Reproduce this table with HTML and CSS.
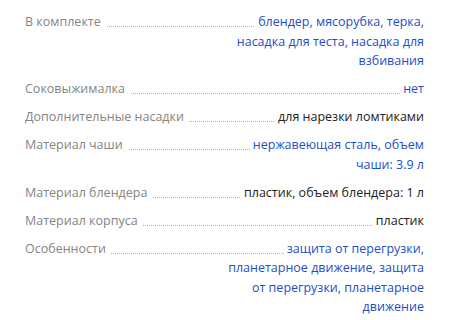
FILE: index.html
```html
<!DOCTYPE html>
<html lang="ru">
<head>
<meta charset="utf-8">
<link rel="stylesheet" href="styles.css">
</head>
<body>
<dl class="specs">
  <div class="row">
    <dt class="label"><span>В комплекте</span></dt>
    <dd class="value link"><span>блендер, мясорубка, терка, насадка для теста, насадка для взбивания</span></dd>
  </div>
  <div class="row">
    <dt class="label"><span>Соковыжималка</span></dt>
    <dd class="value link"><span>нет</span></dd>
  </div>
  <div class="row">
    <dt class="label"><span>Дополнительные насадки</span></dt>
    <dd class="value"><span>для нарезки ломтиками</span></dd>
  </div>
  <div class="row">
    <dt class="label"><span>Материал чаши</span></dt>
    <dd class="value link"><span>нержавеющая сталь, объем чаши: 3.9 л</span></dd>
  </div>
  <div class="row">
    <dt class="label"><span>Материал блендера</span></dt>
    <dd class="value"><span>пластик, объем блендера: 1 л</span></dd>
  </div>
  <div class="row">
    <dt class="label"><span>Материал корпуса</span></dt>
    <dd class="value"><span>пластик</span></dd>
  </div>
  <div class="row">
    <dt class="label"><span>Особенности</span></dt>
    <dd class="value link"><span>защита от перегрузки, планетарное движение, защита от перегрузки, планетарное движение</span></dd>
  </div>
</dl>
</body>
</html>
```

FILE: styles.css
```css
html, body {
  margin: 0;
  padding: 0;
  background: #fff;
}
body {
  font-family: "Open Sans", "Noto Sans", sans-serif;
  font-size: 12.5px;
  line-height: 19.5px;
  color: #222;
}
.specs {
  margin: 0;
  padding: 12px 31px 0 25px;
  display: flex;
  flex-direction: column;
  gap: 8.5px;
}
.row {
  display: flex;
  justify-content: space-between;
  align-items: flex-start;
  background-image: linear-gradient(to right, #b3b3b3 50%, transparent 50%);
  background-size: 2px 1px;
  background-repeat: repeat-x;
  background-position: 0 14px;
}
.label {
  margin: 0;
  color: #858585;
  flex: none;
}
.label span {
  background: #fff;
  padding-right: 5px;
}
.value {
  margin: 0;
  max-width: 196px;
  text-align: right;
}
.value span {
  background: #fff;
  padding-left: 3px;
}
.link {
  color: #1f4dc5;
}
```
